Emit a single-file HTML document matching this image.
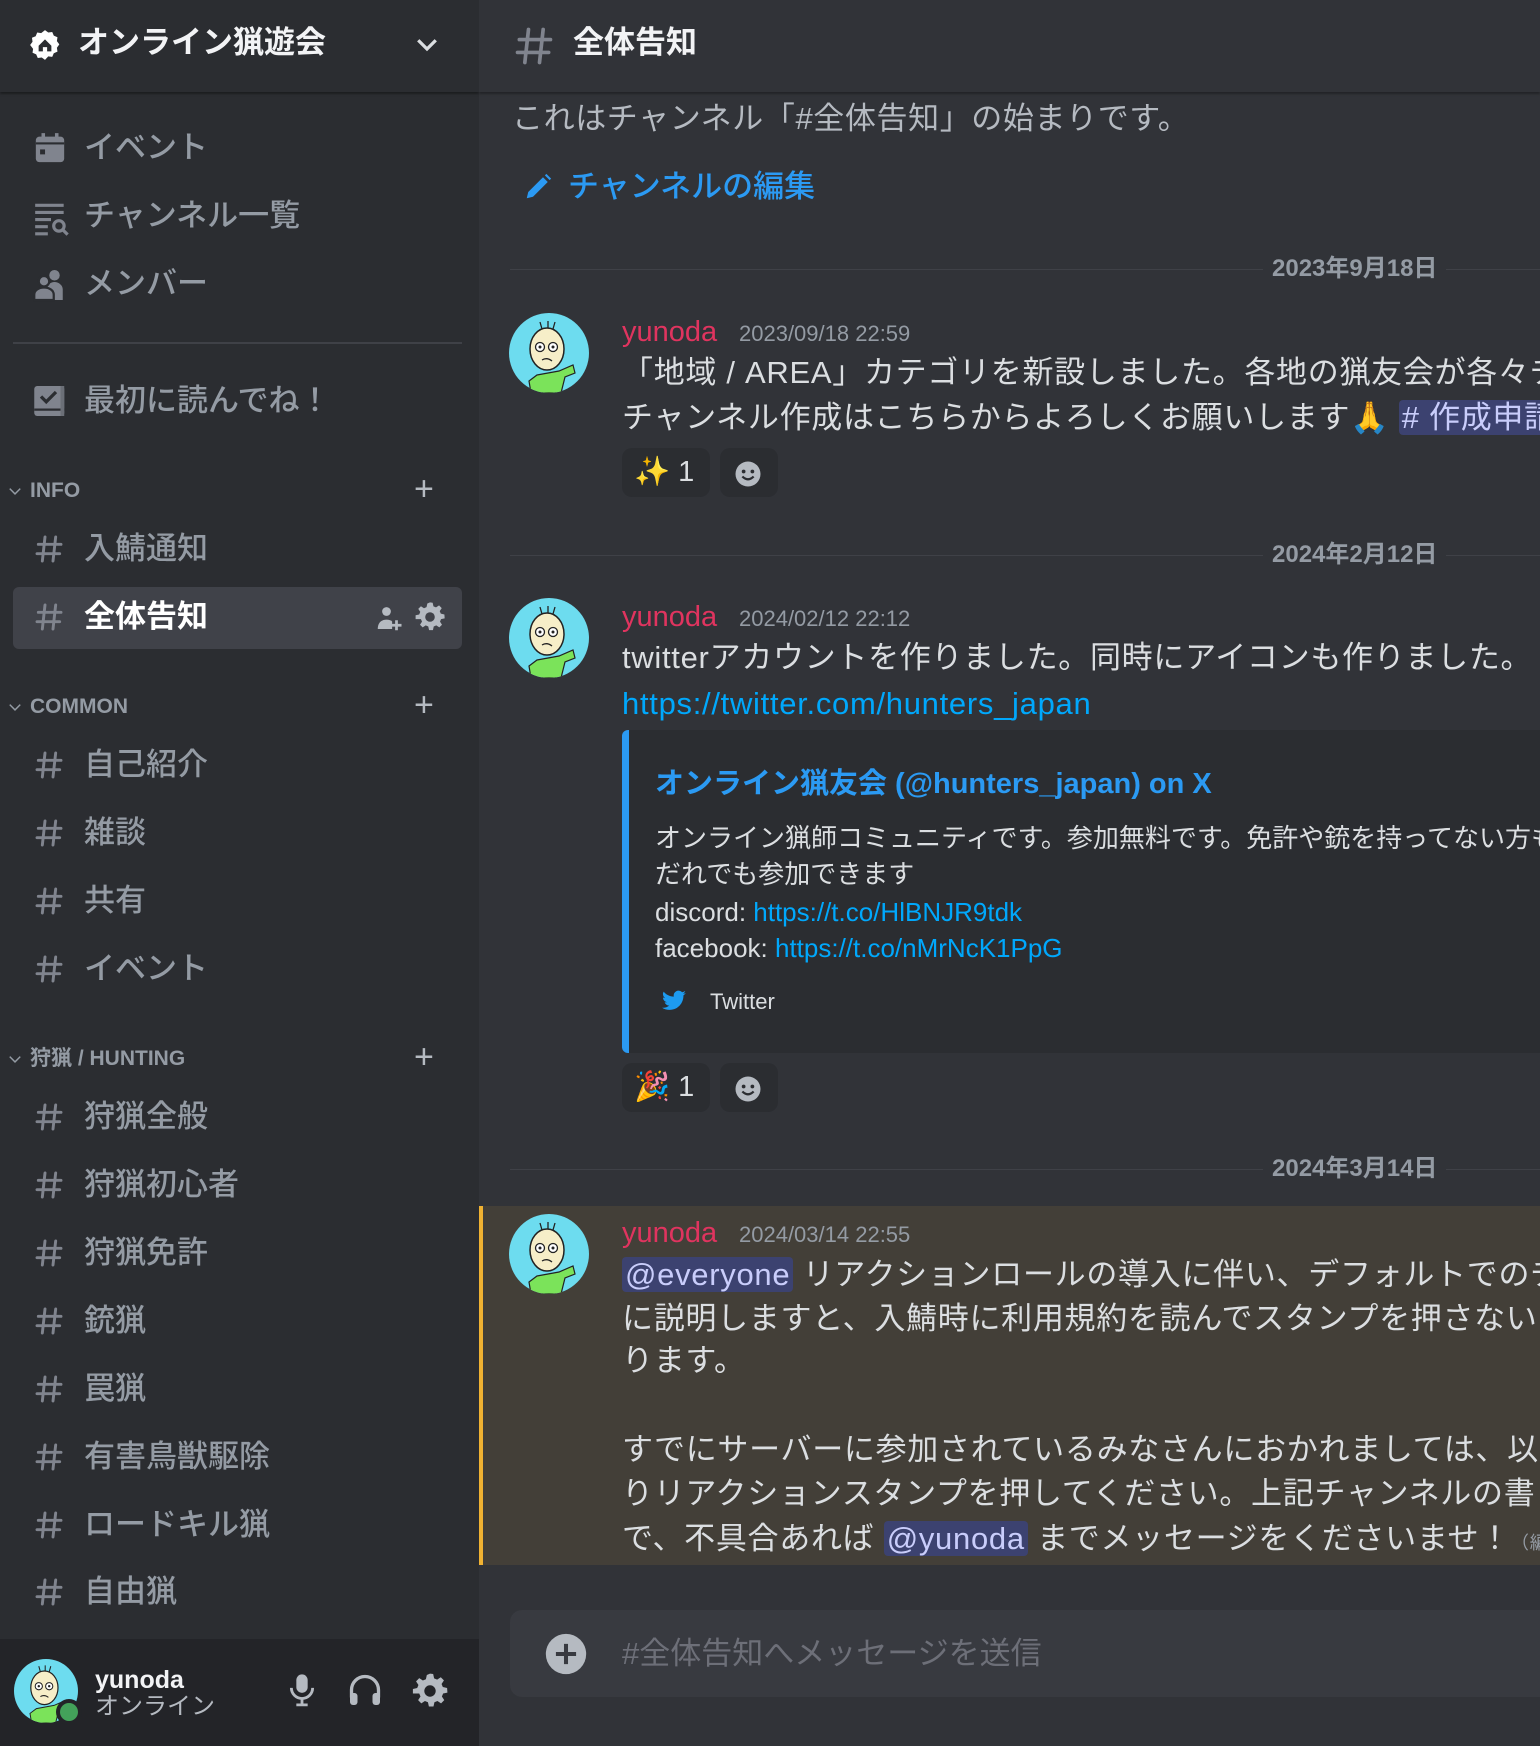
<!DOCTYPE html>
<html><head><meta charset="utf-8">
<style>
*{margin:0;padding:0;box-sizing:border-box}
body{width:1540px;height:1746px;overflow:hidden;background:#313338;font-family:"Liberation Sans","Noto Sans CJK JP",sans-serif;position:relative}
.a{position:absolute;white-space:nowrap;line-height:40px;height:40px}
#side{position:absolute;left:0;top:0;width:479px;height:1746px;background:#2b2d31;overflow:hidden}
#shead{position:absolute;left:0;top:0;width:479px;height:92px;background:#2b2d31;box-shadow:0 2px 2px rgba(0,0,0,.35);z-index:2}
.nav{color:#949ba4;font-size:31px;font-weight:500}
.ch{color:#949ba4;font-size:31px;font-weight:500;left:84px}
.hs{position:absolute;left:33px;width:32px;height:32px}
.cat{color:#949ba4;font-size:21px;font-weight:700;left:30px}
.plus{color:#b5bac1;font-size:34px;left:414px;font-weight:300}
.chev{position:absolute;left:8px;width:14px;height:14px}
#main{position:absolute;left:479px;top:0;width:1061px;height:1746px;overflow:hidden}
.m{color:#dbdee1;font-size:31px;left:143px;letter-spacing:0.7px}
.name{color:#e0345f;font-size:29px;left:143px;font-weight:500}
.ts{color:#949ba4;font-size:22px}
.dl{position:absolute;left:31px;right:0;height:1px;background:#3f4147}
.dt{position:absolute;color:#949ba4;font-size:24px;font-weight:600;background:#313338;padding:0 9px;line-height:28px;left:784px}
.av{position:absolute;width:80px;height:80px;left:30px}
.rx{position:absolute;height:49px;background:#2b2d31;border-radius:10px;color:#dbdee1;font-size:29px;line-height:49px}
.lnk{color:#00a8fc}
.men{background:#3c4270;color:#c9cdfb;border-radius:4px;padding:0 3px}
</style></head><body>
<svg width="0" height="0" style="position:absolute">
<defs>
<symbol id="avs" viewBox="0 0 80 80">
<clipPath id="cc"><circle cx="40" cy="40" r="40"/></clipPath>
<g clip-path="url(#cc)">
<rect width="80" height="80" fill="#6ddcef"/>
<path d="M28 62 L50 58 L64 52 L66 60 L56 64 L52 80 L22 80 L20 68 Z" fill="#7be35a" stroke="#222" stroke-width="1.2"/>
<ellipse cx="38" cy="36" rx="17" ry="21" fill="#f6eec8" stroke="#222" stroke-width="1.5"/>
<path d="M33 16 L31 9 M39 15 L39 8 M44 16 L46 9" stroke="#222" stroke-width="1.3"/>
<circle cx="31" cy="34" r="4.5" fill="#fff" stroke="#222" stroke-width="1.3"/><circle cx="31" cy="34" r="1.5" fill="#222"/>
<circle cx="44" cy="34" r="4.5" fill="#fff" stroke="#222" stroke-width="1.3"/><circle cx="44" cy="34" r="1.5" fill="#222"/>
<path d="M33 47 Q38 44 43 48" stroke="#222" stroke-width="1.3" fill="none"/>
</g></symbol>
<symbol id="hash" viewBox="0 0 24 24"><path d="M9 3 L7 21 M17 3 L15 21 M4 8.5 H21 M3 15.5 H20" stroke="#80848e" stroke-width="2.2" fill="none" stroke-linecap="round"/></symbol>
<symbol id="smile" viewBox="0 0 24 24"><circle cx="12" cy="12" r="10" fill="#b5bac1"/><circle cx="8.5" cy="10" r="1.5" fill="#2b2d31"/><circle cx="15.5" cy="10" r="1.5" fill="#2b2d31"/><path d="M7.5 14 Q12 18.5 16.5 14" stroke="#2b2d31" stroke-width="1.8" fill="none"/></symbol>
</defs></svg>

<div id="side">
<div id="shead">
<svg style="position:absolute;left:28px;top:28px" width="34" height="34" viewBox="0 0 24 24"><path d="M12 1.5l2.3 1.7 2.8-.4 1.1 2.6 2.6 1.1-.4 2.8 1.7 2.3-1.7 2.3.4 2.8-2.6 1.1-1.1 2.6-2.8-.4L12 22.5l-2.3-1.7-2.8.4-1.1-2.6-2.6-1.1.4-2.8L1.5 12l1.7-2.3-.4-2.8 2.6-1.1 1.1-2.6 2.8.4z" fill="#fff"/><path d="M7.5 12.5L12 8l4.5 4.5V16.5h-3v-3h-3v3h-3z" fill="#2b2d31"/></svg>
<div class="a" style="left:78px;top:23px;color:#f2f3f5;font-size:31px;font-weight:700">オンライン猟遊会</div>
<svg style="position:absolute;left:412px;top:29px" width="30" height="30" viewBox="0 0 24 24"><path d="M5 9l7 7 7-7" stroke="#dbdee1" stroke-width="2.6" fill="none"/></svg>
</div>

<svg style="position:absolute;left:33px;top:131px" width="34" height="34" viewBox="0 0 24 24"><rect x="2" y="4" width="20" height="18" rx="2.5" fill="#80848e"/><rect x="6" y="1.5" width="2.5" height="4" fill="#80848e"/><rect x="15.5" y="1.5" width="2.5" height="4" fill="#80848e"/><rect x="2" y="8" width="20" height="1.5" fill="#2b2d31"/><rect x="5" y="13" width="3.5" height="3.5" fill="#2b2d31"/></svg>
<div class="a nav" style="left:84px;top:128px">イベント</div>
<svg style="position:absolute;left:32px;top:199px" width="38" height="38" viewBox="0 0 24 24"><path d="M2 4h18M2 8.5h18M2 13h10M2 17.5h8M2 22h8" stroke="#80848e" stroke-width="2"/><circle cx="17" cy="17" r="3.3" stroke="#80848e" stroke-width="2" fill="none"/><path d="M19.5 19.5L22.5 22.5" stroke="#80848e" stroke-width="2"/></svg>
<div class="a nav" style="left:84px;top:196px">チャンネル一覧</div>
<svg style="position:absolute;left:32px;top:267px" width="36" height="36" viewBox="0 0 24 24"><circle cx="15" cy="5.5" r="3.5" fill="#80848e"/><path d="M10 15c0-3 2.5-5 5-5s5.5 2 5.5 5v7H10z" fill="#80848e"/><circle cx="8" cy="9.5" r="3.5" fill="#80848e" stroke="#2b2d31" stroke-width="1.5"/><path d="M1.5 22v-3.5c0-3 3-4.8 6.5-4.8s6.5 1.8 6.5 4.8V22z" fill="#80848e" stroke="#2b2d31" stroke-width="1.5"/></svg>
<div class="a nav" style="left:84px;top:264px">メンバー</div>
<div style="position:absolute;left:13px;top:342px;width:449px;height:2px;background:#3f4147"></div>
<svg style="position:absolute;left:32px;top:383px" width="36" height="36" viewBox="0 0 24 24"><rect x="1.5" y="2" width="20" height="20" rx="2" fill="#80848e"/><rect x="1.5" y="17" width="20" height="1.5" fill="#2b2d31"/><path d="M6 9l3.5 3.5L16 6" stroke="#2b2d31" stroke-width="2.2" fill="none"/><rect x="19" y="2" width="2.5" height="20" fill="#6b6f77"/></svg>
<div class="a nav" style="left:84px;top:381px">最初に読んでね！</div>

<svg class="chev" style="top:484px" viewBox="0 0 24 24"><path d="M3 8l9 9 9-9" stroke="#949ba4" stroke-width="2.5" fill="none"/></svg>
<div class="a cat" style="top:471px">INFO</div>
<div class="a plus" style="top:469px">+</div>
<svg class="hs" style="top:533px"><use href="#hash"/></svg><div class="a ch" style="top:529px">入鯖通知</div>
<div style="position:absolute;left:13px;top:587px;width:449px;height:62px;background:#404249;border-radius:6px"></div>
<svg class="hs" style="top:601px"><use href="#hash"/></svg><div class="a ch" style="top:597px;color:#fff;font-weight:700">全体告知</div>
<svg style="position:absolute;left:374px;top:604px" width="30" height="30" viewBox="0 0 24 24"><circle cx="10" cy="6" r="3.5" fill="#b5bac1"/><path d="M3 20c0-5 3-7.5 7-7.5 2 0 3.5.5 4.5 1.5V20z" fill="#b5bac1"/><path d="M18 13v8M14 17h8" stroke="#b5bac1" stroke-width="2.2"/></svg>
<svg style="position:absolute;left:414px;top:601px" width="32" height="32" viewBox="0 0 24 24"><path d="M12 1l2 .3.6 2.7 1.9.8 2.3-1.5 2 2-1.5 2.3.8 1.9 2.7.6.2 2.9-2.7.6-.8 1.9 1.5 2.3-2 2-2.3-1.5-1.9.8-.6 2.7h-2.9l-.6-2.7-1.9-.8-2.3 1.5-2-2 1.5-2.3-.8-1.9L1.2 13.6V10.7l2.7-.6.8-1.9-1.5-2.3 2-2 2.3 1.5 1.9-.8.6-2.7z" fill="#b5bac1"/><circle cx="12" cy="12" r="3.6" fill="#404249"/></svg>

<svg class="chev" style="top:700px" viewBox="0 0 24 24"><path d="M3 8l9 9 9-9" stroke="#949ba4" stroke-width="2.5" fill="none"/></svg>
<div class="a cat" style="top:687px">COMMON</div>
<div class="a plus" style="top:685px">+</div>
<svg class="hs" style="top:749px"><use href="#hash"/></svg><div class="a ch" style="top:745px">自己紹介</div>
<svg class="hs" style="top:817px"><use href="#hash"/></svg><div class="a ch" style="top:813px">雑談</div>
<svg class="hs" style="top:885px"><use href="#hash"/></svg><div class="a ch" style="top:881px">共有</div>
<svg class="hs" style="top:953px"><use href="#hash"/></svg><div class="a ch" style="top:949px">イベント</div>

<svg class="chev" style="top:1052px" viewBox="0 0 24 24"><path d="M3 8l9 9 9-9" stroke="#949ba4" stroke-width="2.5" fill="none"/></svg>
<div class="a cat" style="top:1039px">狩猟 / HUNTING</div>
<div class="a plus" style="top:1037px">+</div>
<svg class="hs" style="top:1101px"><use href="#hash"/></svg><div class="a ch" style="top:1097px">狩猟全般</div>
<svg class="hs" style="top:1169px"><use href="#hash"/></svg><div class="a ch" style="top:1165px">狩猟初心者</div>
<svg class="hs" style="top:1237px"><use href="#hash"/></svg><div class="a ch" style="top:1233px">狩猟免許</div>
<svg class="hs" style="top:1305px"><use href="#hash"/></svg><div class="a ch" style="top:1301px">銃猟</div>
<svg class="hs" style="top:1373px"><use href="#hash"/></svg><div class="a ch" style="top:1369px">罠猟</div>
<svg class="hs" style="top:1441px"><use href="#hash"/></svg><div class="a ch" style="top:1437px">有害鳥獣駆除</div>
<svg class="hs" style="top:1509px"><use href="#hash"/></svg><div class="a ch" style="top:1505px">ロードキル猟</div>
<svg class="hs" style="top:1576px"><use href="#hash"/></svg><div class="a ch" style="top:1572px">自由猟</div>

<div style="position:absolute;left:0;top:1639px;width:479px;height:107px;background:#232428">
<svg style="position:absolute;left:14px;top:20px" width="64" height="64"><use href="#avs" width="64" height="64"/></svg>
<div style="position:absolute;left:56px;top:60px;width:26px;height:26px;border-radius:50%;background:#232428"></div>
<div style="position:absolute;left:60px;top:64px;width:18px;height:18px;border-radius:50%;background:#43a25a"></div>
<div class="a" style="left:95px;top:21px;color:#f2f3f5;font-size:25px;font-weight:700">yunoda</div>
<div class="a" style="left:95px;top:48px;color:#b5bac1;font-size:24px">オンライン</div>
<svg style="position:absolute;left:285px;top:33px" width="34" height="36" viewBox="0 0 24 24"><rect x="8" y="1" width="8" height="13" rx="4" fill="#b5bac1"/><path d="M4.5 10.5a7.5 7.5 0 0 0 15 0M12 18v4M8 22.5h8" stroke="#b5bac1" stroke-width="2" fill="none"/></svg>
<svg style="position:absolute;left:347px;top:33px" width="36" height="36" viewBox="0 0 24 24"><path d="M3 17v-5a9 9 0 0 1 18 0v5" stroke="#b5bac1" stroke-width="2.2" fill="none"/><rect x="2" y="14" width="5" height="8" rx="2" fill="#b5bac1"/><rect x="17" y="14" width="5" height="8" rx="2" fill="#b5bac1"/></svg>
<svg style="position:absolute;left:411px;top:33px" width="38" height="38" viewBox="0 0 24 24"><path d="M12 1l2 .3.6 2.7 1.9.8 2.3-1.5 2 2-1.5 2.3.8 1.9 2.7.6.2 2.9-2.7.6-.8 1.9 1.5 2.3-2 2-2.3-1.5-1.9.8-.6 2.7h-2.9l-.6-2.7-1.9-.8-2.3 1.5-2-2 1.5-2.3-.8-1.9L1.2 13.6V10.7l2.7-.6.8-1.9-1.5-2.3 2-2 2.3 1.5 1.9-.8.6-2.7z" fill="#b5bac1"/><circle cx="12" cy="12" r="3.6" fill="#232428"/></svg>
</div>
</div>

<div id="main">
<div style="position:absolute;left:0;top:0;width:1061px;height:92px;background:#313338;box-shadow:0 2px 2px rgba(0,0,0,.3);z-index:2">
<svg style="position:absolute;left:33px;top:24px" width="44" height="44" viewBox="0 0 24 24"><path d="M9 3 L7 21 M17 3 L15 21 M4 8.5 H21 M3 15.5 H20" stroke="#80848e" stroke-width="2" fill="none" stroke-linecap="round"/></svg>
<div class="a" style="left:94px;top:23px;color:#f2f3f5;font-size:31px;font-weight:700">全体告知</div>
</div>

<div class="a" style="left:33px;top:99px;color:#b5bac1;font-size:31px;letter-spacing:0.6px">これはチャンネル「#全体告知」の始まりです。</div>
<svg style="position:absolute;left:44px;top:172px" width="30" height="30" viewBox="0 0 24 24"><path d="M3 21l1.2-5L16 4.2l3.8 3.8L8 19.8z" fill="#2b9af3"/><path d="M17.5 2.7l1.2-1.2 3.8 3.8-1.2 1.2z" fill="#2b9af3"/></svg>
<div class="a" style="left:89px;top:167px;color:#2b9af3;font-size:31px;font-weight:500">チャンネルの編集</div>

<div class="dl" style="top:269px"></div><div class="dt" style="top:255px">2023年9月18日</div>
<svg class="av" style="top:313px"><use href="#avs" width="80" height="80"/></svg>
<div class="a name" style="top:312px">yunoda</div>
<div class="a ts" style="left:260px;top:314px">2023/09/18 22:59</div>
<div class="a m" style="top:353px">「地域 / AREA」カテゴリを新設しました。各地の猟友会が各々チャンネルを作成する</div>
<div class="a m" style="top:398px">チャンネル作成はこちらからよろしくお願いします🙏 <span class="men"># 作成申請</span></div>
<div class="rx" style="left:143px;top:448px;width:88px;padding-left:12px">✨ 1</div>
<div class="rx" style="left:241px;top:448px;width:58px"><svg style="position:absolute;left:13px;top:11px" width="30" height="30"><use href="#smile" width="30" height="30"/></svg></div>

<div class="dl" style="top:555px"></div><div class="dt" style="top:541px">2024年2月12日</div>
<svg class="av" style="top:598px"><use href="#avs" width="80" height="80"/></svg>
<div class="a name" style="top:597px">yunoda</div>
<div class="a ts" style="left:260px;top:599px">2024/02/12 22:12</div>
<div class="a m" style="top:638px">twitterアカウントを作りました。同時にアイコンも作りました。</div>
<div class="a m lnk" style="top:684px;color:#00a8fc">https://twitter.com/hunters_japan</div>
<div style="position:absolute;left:143px;top:730px;width:940px;height:323px;background:#2b2d31;border-left:7px solid #2b9af3;border-radius:6px 0 0 6px"></div>
<div class="a" style="left:176px;top:764px;color:#2b9af3;font-size:29px;font-weight:700">オンライン猟友会 (@hunters_japan) on X</div>
<div class="a" style="left:176px;top:818px;color:#dbdee1;font-size:26px">オンライン猟師コミュニティです。参加無料です。免許や銃を持ってない方も</div>
<div class="a" style="left:176px;top:854px;color:#dbdee1;font-size:26px">だれでも参加できます</div>
<div class="a" style="left:176px;top:892px;color:#dbdee1;font-size:26px">discord: <span class="lnk">https://t.co/HlBNJR9tdk</span></div>
<div class="a" style="left:176px;top:928px;color:#dbdee1;font-size:26px">facebook: <span class="lnk">https://t.co/nMrNcK1PpG</span></div>
<svg style="position:absolute;left:181px;top:988px" width="28" height="26" viewBox="0 0 24 24"><path d="M23 4.6c-.8.4-1.7.6-2.6.7.9-.6 1.6-1.4 2-2.5-.9.5-1.900.9-2.9 1.1a4.5 4.5 0 0 0-7.7 4.1C7.9 7.8 4.6 6 2.4 3.3a4.5 4.5 0 0 0 1.4 6c-.7 0-1.4-.2-2-.6 0 2.2 1.6 4 3.6 4.4-.7.2-1.4.2-2 .1.6 1.8 2.2 3.1 4.2 3.1A9 9 0 0 1 1 18.2 12.8 12.8 0 0 0 7.9 20.2c8.3 0 12.8-6.9 12.8-12.8v-.6c.9-.6 1.6-1.4 2.3-2.2z" fill="#1d9bf0"/></svg>
<div class="a" style="left:231px;top:982px;color:#dbdee1;font-size:22px;font-weight:500">Twitter</div>
<div class="rx" style="left:143px;top:1063px;width:88px;padding-left:12px">🎉 1</div>
<div class="rx" style="left:241px;top:1063px;width:58px"><svg style="position:absolute;left:13px;top:11px" width="30" height="30"><use href="#smile" width="30" height="30"/></svg></div>

<div class="dl" style="top:1169px"></div><div class="dt" style="top:1155px">2024年3月14日</div>
<div style="position:absolute;left:0;top:1206px;width:1061px;height:359px;background:#433f38;border-left:4px solid #f0b232"></div>
<svg class="av" style="top:1214px"><use href="#avs" width="80" height="80"/></svg>
<div class="a name" style="top:1213px">yunoda</div>
<div class="a ts" style="left:260px;top:1215px">2024/03/14 22:55</div>
<div class="a m" style="top:1255px"><span class="men">@everyone</span> リアクションロールの導入に伴い、デフォルトでのチャンネル</div>
<div class="a m" style="top:1299px">に説明しますと、入鯖時に利用規約を読んでスタンプを押さないとチャンネル</div>
<div class="a m" style="top:1341px">ります。</div>
<div class="a m" style="top:1430px">すでにサーバーに参加されているみなさんにおかれましては、以下のチャンネ</div>
<div class="a m" style="top:1474px">りリアクションスタンプを押してください。上記チャンネルの書き込みも</div>
<div class="a m" style="top:1519px">で、不具合あれば <span class="men">@yunoda</span> までメッセージをくださいませ！<span style="font-size:18px;color:#949ba4">（編集済）</span></div>

<div style="position:absolute;left:31px;top:1610px;width:1060px;height:87px;background:#383a40;border-radius:12px"></div>
<svg style="position:absolute;left:65px;top:1632px" width="44" height="44" viewBox="0 0 24 24"><circle cx="12" cy="12" r="11" fill="#b5bac1"/><path d="M12 6.5v11M6.5 12h11" stroke="#383a40" stroke-width="2.2"/></svg>
<div class="a" style="left:143px;top:1634px;color:#6d6f78;font-size:31px">#全体告知へメッセージを送信</div>
</div>
</body></html>
